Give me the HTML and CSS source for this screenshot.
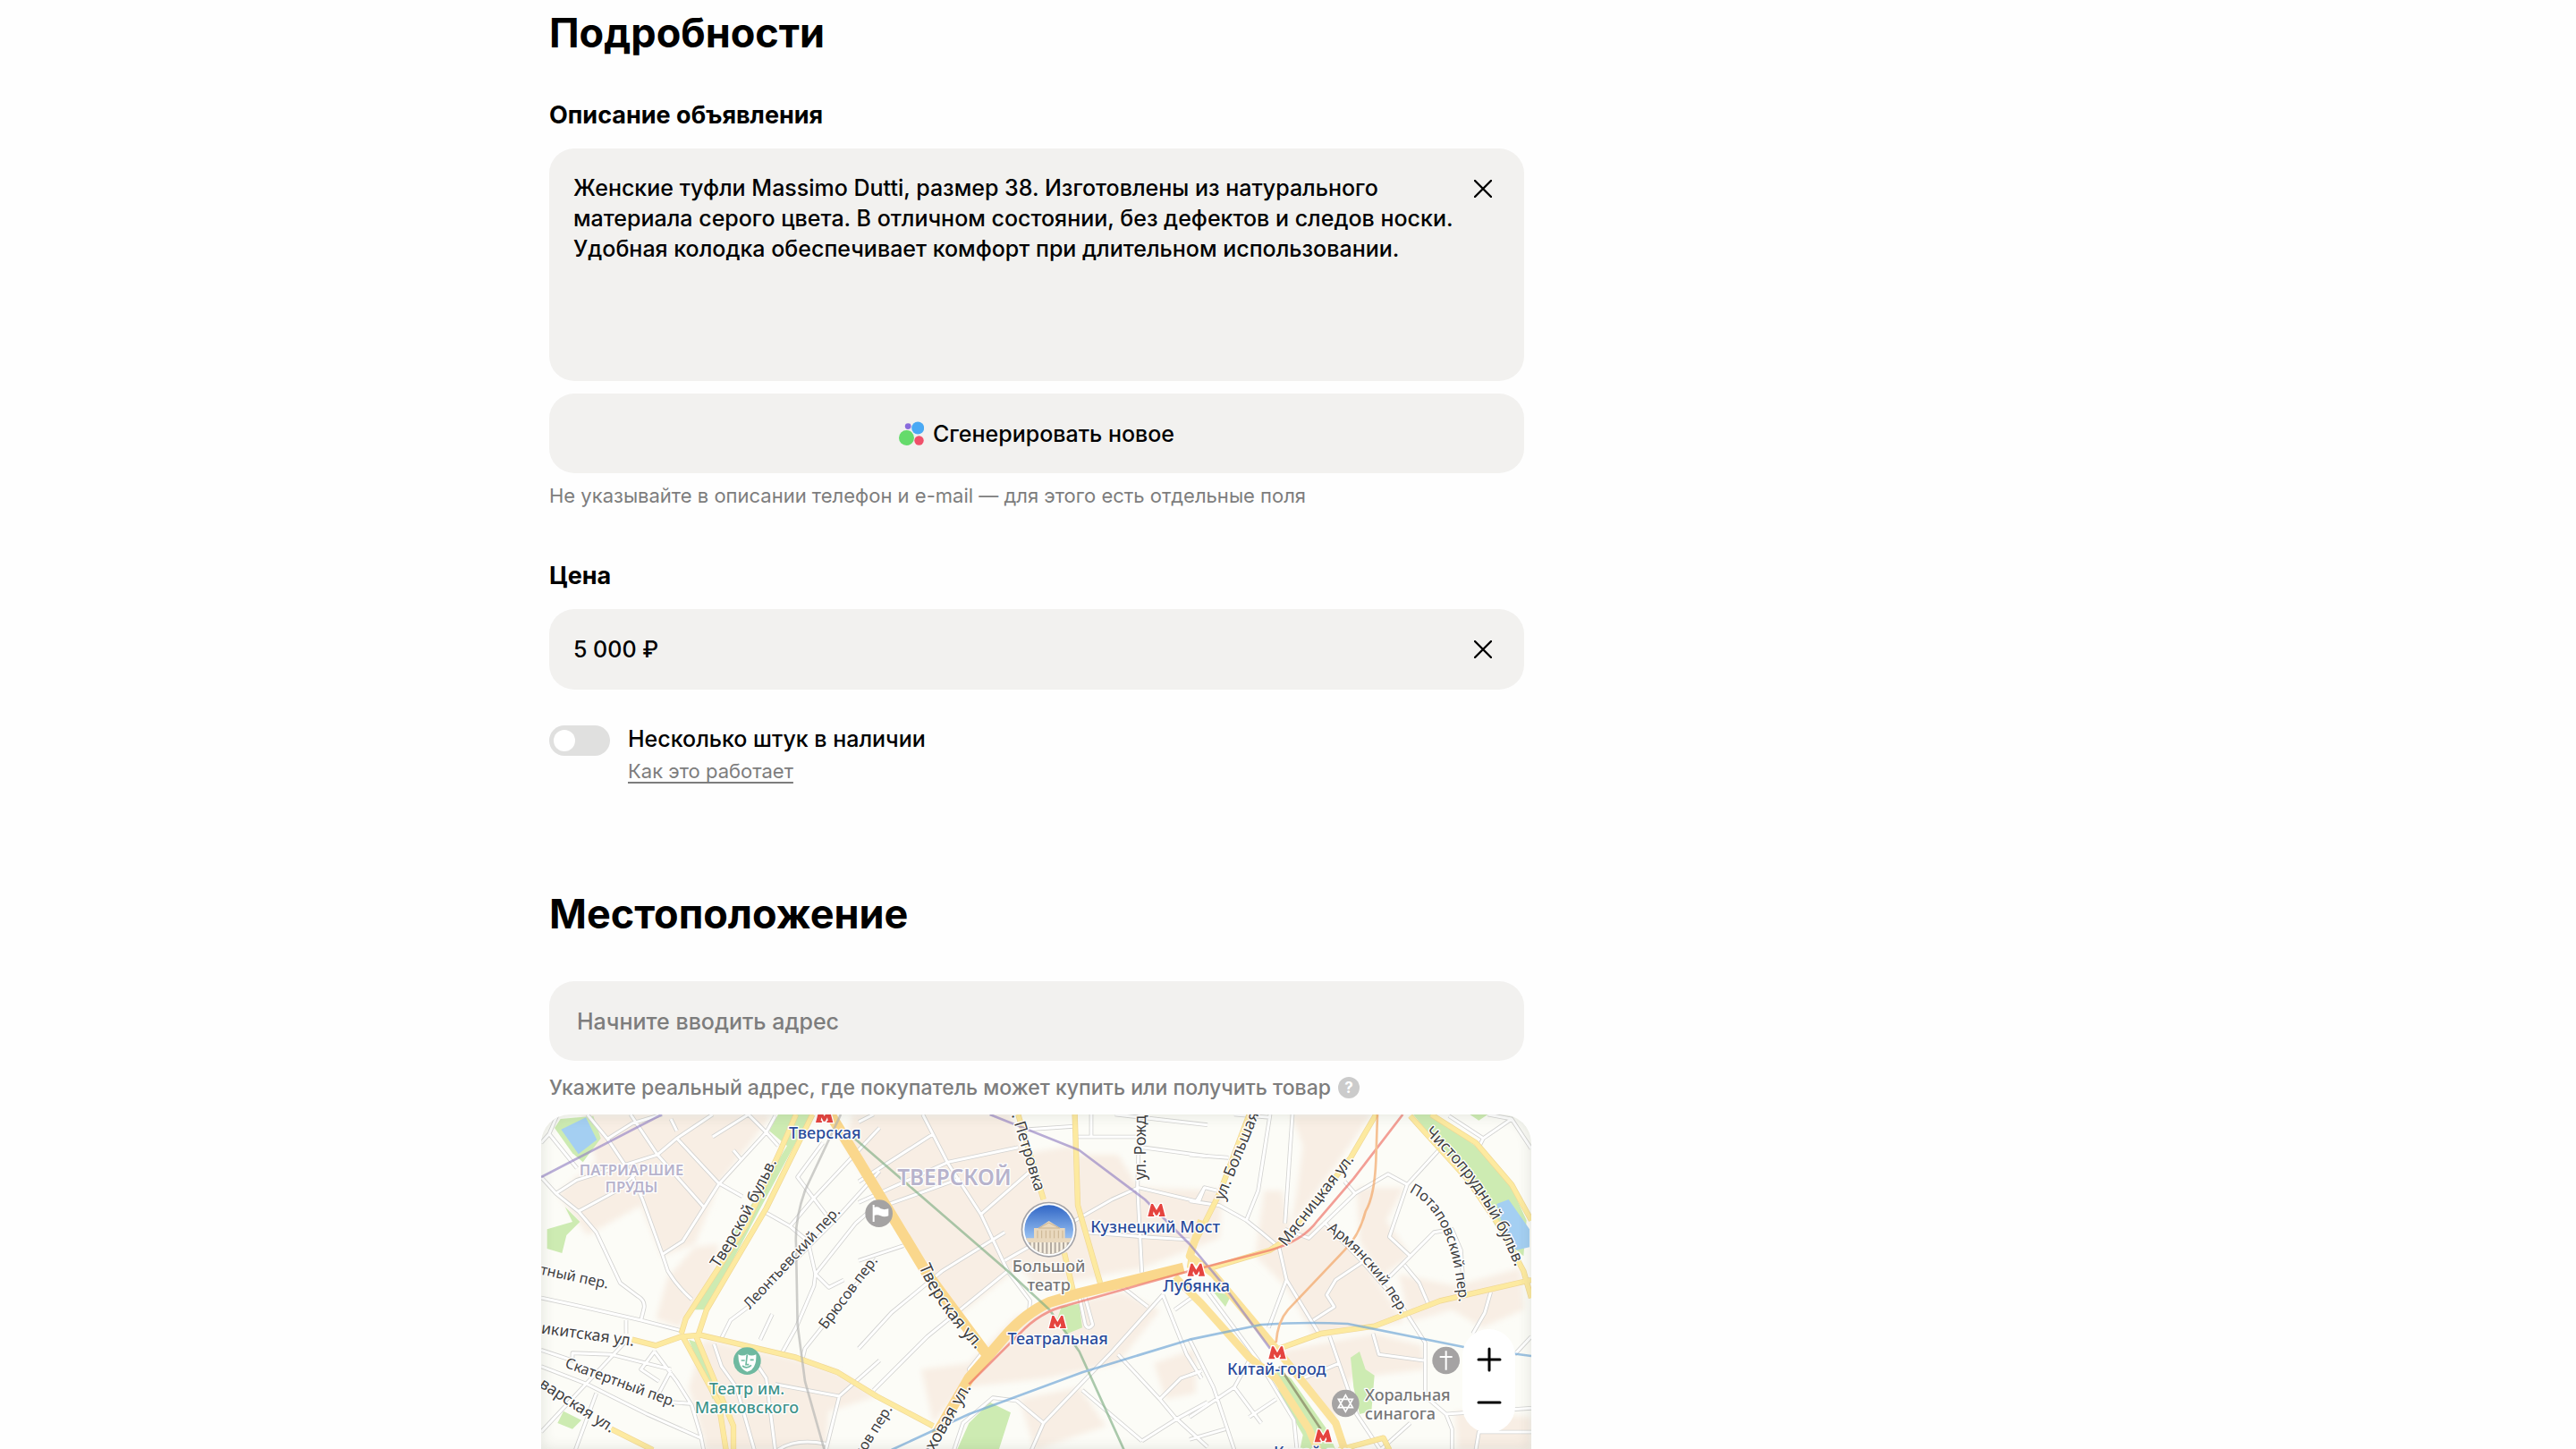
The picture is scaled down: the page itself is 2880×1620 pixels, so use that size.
FILE: index.html
```html
<!DOCTYPE html>
<html lang="ru">
<head>
<meta charset="utf-8">
<meta name="viewport" content="width=device-width, initial-scale=1">
<title>Подробности объявления</title>
<link rel="stylesheet" href="styles.css">
</head>
<body>
<main class="page">
  <form class="form">
    <section class="section">
      <h1 class="section-title">Подробности</h1>
      <div class="group">
        <label class="group-label" for="description">Описание объявления</label>
        <div class="field field-area">
          <textarea class="control" id="description" rows="6">Женские туфли Massimo Dutti, размер 38. Изготовлены из натурального
материала серого цвета. В отличном состоянии, без дефектов и следов носки.
Удобная колодка обеспечивает комфорт при длительном использовании.</textarea>
          <button class="clear" type="button" aria-label="Очистить описание">
            <svg width="20" height="20" viewBox="0 0 20 20" aria-hidden="true"><path d="M1 1L19 19M19 1L1 19"/></svg>
          </button>
        </div>
        <button class="generate" type="button">
          <svg width="28" height="28" viewBox="0 0 28 28" aria-hidden="true">
            <circle cx="8.5" cy="18.5" r="8.5" fill="#65db6b"/>
            <circle cx="21.2" cy="7.5" r="7" fill="#4aa9f4"/>
            <circle cx="10.2" cy="5.6" r="3.4" fill="#8a6bdc"/>
            <circle cx="22.5" cy="21.5" r="5.2" fill="#f0506a"/>
          </svg>
          Сгенерировать новое
        </button>
        <p class="hint hint-small">Не указывайте в описании телефон и e-mail — для этого есть отдельные поля</p>
      </div>
      <div class="group">
        <label class="group-label" for="price">Цена</label>
        <div class="field">
          <input class="control" id="price" type="text" value="5 000 ₽">
          <button class="clear" type="button" aria-label="Очистить цену">
            <svg width="20" height="20" viewBox="0 0 20 20" aria-hidden="true"><path d="M1 1L19 19M19 1L1 19"/></svg>
          </button>
        </div>
        <div class="switch-row">
          <input class="switch" id="several" type="checkbox">
          <div class="switch-text">
            <label for="several">Несколько штук в наличии</label>
            <a class="help-link" href="#how">Как это работает</a>
          </div>
        </div>
      </div>
    </section>

    <section class="section">
      <h2 class="section-title">Местоположение</h2>
      <div class="field">
        <input class="control control-address" type="text" aria-label="Адрес" placeholder="Начните вводить адрес">
      </div>
      <p class="hint hint-address">Укажите реальный адрес, где покупатель может купить или получить товар
        <button class="question" type="button" aria-label="Подсказка">?</button>
      </p>
      <div class="map">
        <svg class="map-canvas" viewBox="45 45 3321 1125" preserveAspectRatio="xMidYMin slice" role="img" aria-label="Карта центра Москвы">
          <defs>
            <linearGradient id="sky" x1="0" y1="0" x2="0" y2="1">
              <stop offset="0" stop-color="#2d63c4"/><stop offset=".6" stop-color="#8fb9ee"/><stop offset="1" stop-color="#e6dccf"/>
            </linearGradient>
            <clipPath id="round"><circle cx="638" cy="431" r="82"/></clipPath>
            <filter id="soft"><feGaussianBlur stdDeviation="9"/></filter>
            <path id="metro" d="M0 42L11 0H17L29 21L41 0H47L58 42H37L38 36H41L39 25L32 38H26L19 25L17 36H20L21 42Z"/>
            <g id="streets">
              <path d="M100 45L72 110L165 225M72 110L45 140M200 45L270 130L350 250L385 330L450 510L470 570Q500 620 550 665M345 45L435 180L590 355M270 125L350 75L450 45M95 310L165 265L435 180L500 125L620 45M45 255L95 310L170 370L230 440L310 610L370 655Q395 670 390 695L380 735M170 370L300 300L385 225M500 125L640 275L720 320M480 60L500 100M620 120L740 45M740 45L800 105L840 150M830 50L800 105L640 280L520 470L450 515M690 165L715 195M45 660L160 685L380 735L515 770M800 375L880 420L940 470L965 580L1010 625L1060 600M990 140L905 255L1000 380M1180 90L960 325L880 420M650 795L680 735L740 690L1030 400L1180 235M1180 340L1100 410L965 580L960 620L900 760L850 850M820 715L780 800M1170 530L930 830L920 870M625 815L650 890L700 960L760 1170M760 870L800 930L830 1170M830 950L1045 990M1180 870L1045 990L1000 1170M45 835L150 870L150 845L280 850L480 900M325 810L45 1110M45 890L200 950L400 1050L580 1130M330 735V780M425 840L380 900L440 940M425 840L500 940L550 1020L580 1120L590 1170M230 980L160 1170M480 905L440 980M480 1010L545 1015M840 1170Q900 1130 1000 1150"/>
              <path transform="translate(1110 0)" d="M0 70L50 45M215 45L300 210L410 380L500 570L575 670L570 720M0 270L250 110M0 340L300 205L535 155M410 380L570 240M90 350L340 260M0 535L150 485M490 535L850 330L940 290L1130 335M0 830L110 710L280 570L490 440M50 970L230 790L500 570M780 45V120M735 120H930M570 95L720 85M860 45L1170 80M950 155L1170 185M940 120L935 290L950 575M760 440L950 455L1110 465M1160 290L1130 340M880 620L970 690M1020 650L850 840L620 1080L580 1170M1020 650L1100 850L1150 930M1060 700L1130 650M740 655L760 750Q770 770 785 750L760 660M870 850L1010 1000L1060 1060L1170 1160M1010 1000L1080 930L1150 905M950 1140L1060 1070L1170 1010M750 970L950 1140M320 1170L350 1080L450 995L530 1005L620 1080M430 825L370 900L380 920"/>
              <path transform="translate(2220 0)" d="M150 45L270 55M0 180L130 190M270 45L230 300L190 400M345 45L320 410M300 490L325 600L410 740L440 790M470 790L560 1050L640 1170M0 335L100 350L190 400L240 440L300 490M30 340L50 290L90 300M320 430L400 460L555 310L665 245L730 280L840 160M520 270L555 310M730 280L670 455L740 520L660 600M740 520L820 440L880 430L910 500L920 640M720 550L770 610L800 680M450 405L580 540L720 700L790 810L790 990L860 1050L880 1100V1170M580 540L490 600L460 650L485 690L415 735M325 600L265 760M615 780L635 850L785 870M1010 640L990 710L950 780M1146 790L1090 850M870 50L985 125L1080 60L1146 160M985 125L970 155M1080 60L1000 45M860 1050L1146 1030M960 1170L970 1110L1146 1110M500 880L380 930M0 800L80 960L150 1170M60 640L230 870L350 1070L360 1170M0 1060L150 960L200 870M150 960L240 1080M200 1060L290 1000M0 920L40 905M0 1135L120 1100M640 1170L740 1080"/>
            </g>
            <g id="avenues">
              <path d="M900 45L850 160L730 420L640 560L530 730L515 780M955 45L800 360L600 700L570 790M350 800L430 820L515 790L580 785L900 860L1040 910L1170 990L1360 1090M520 790L640 1010L665 1170M565 790L690 1090V1170M280 1100L420 1170"/>
              <path transform="translate(1110 0)" d="M535 45L620 330M690 510L720 640M725 45L735 350L810 610"/>
              <path transform="translate(2220 0)" d="M200 45L100 310L10 490L0 560M625 45L540 190L330 460L270 500L70 560M300 830L440 780L620 755L840 670L1146 600M740 50L830 150L930 260L1040 420L1120 570L1146 660M810 45L960 140L1080 280L1146 400M500 1170L650 1130L670 1170"/>
            </g>
            <g id="highways">
              <path transform="translate(1110 0)" d="M-95 45L0 200L230 580L430 850M260 1120L370 930L490 790Q560 710 640 675L740 645L1090 560"/>
            </g>
            <g id="squares">
              <path transform="translate(2220 0)" d="M40 400L0 520L80 580L290 830L490 1080L520 1170M-50 590L40 680L200 860L290 930L400 1100L430 1170"/>
            </g>
            <path id="l-boulevard" d="M640 562Q750 395 850 170"/>
            <path id="l-tverskaya" d="M1312 556Q1375 710 1550 880"/>
            <path id="l-armyan" d="M2680 432Q2840 545 2945 750"/>
            <path id="l-chisto" d="M3008 108Q3225 300 3335 620"/>
            <path id="l-potap" d="M2955 305Q3105 375 3125 700"/>
          </defs>

          <rect x="45" y="45" width="3321" height="1125" fill="#fcfcf7"/>
          <g class="blocks" filter="url(#soft)">
            <path d="M180 45H820L640 280L560 480L450 520L380 350L200 450L100 310L230 200Z"/>
            <path d="M560 490L640 480L620 600L510 760L430 730L470 590Z"/>
            <path d="M590 800L920 870L1040 910L1170 990L1010 1040L1000 1170H600L540 960Z"/>
            <path d="M1090 45H1620L1720 340L1640 560L1420 740L1340 560L1200 360L1060 140Z"/>
            <path d="M1640 180L1830 150L1920 590L1700 620L1600 480Z"/>
            <path d="M1830 180H1980L2050 290L2330 300L2320 460L2060 560L1900 590Z"/>
            <path d="M1320 900L1480 880L1640 720L1990 640L2120 700L1980 880L1740 930L1460 960L1360 1080Z"/>
            <path d="M2100 880L2240 830L2240 980L2140 1000ZM1650 1000L1850 960L1940 1090L1700 1170Z"/>
            <path d="M2560 45H2830L2700 230L2560 420L2580 300L2600 150Z"/>
            <path d="M2470 300L2530 300L2560 430L2700 420L2820 560L2940 740L2640 790L2540 620L2440 520Z"/>
            <path d="M2780 290L2940 290L2880 400L2960 520L2860 590L2790 470Z"/>
            <path d="M2920 580L3110 620L3330 560L3340 700L3200 760L3100 700L2960 740Z"/>
            <path d="M2520 840L2840 780L3000 820L3010 900L2760 930L2700 1080L2640 1000Z"/>
            <path d="M3110 1040L3366 1060V1170H3120Z"/>
          </g>
          <g class="parks">
            <path d="M110 60L220 50L245 125L185 205L150 175L90 90Z"/>
            <path d="M125 355L175 405L130 450L115 510L65 495V430L150 405Z"/>
            <path d="M840 45H950L780 360L600 700H560L700 430L870 150L810 100Z"/>
            <path d="M120 1040L180 1070L150 1100L100 1080ZM540 800L570 810L640 990L620 1000Z"/>
            <path d="M1790 690L1850 680L1860 760L1810 780L1770 750ZM1480 1080L1550 1010L1620 1045L1580 1170H1440Z"/>
            <path d="M2970 45H3040L3190 160L3300 290L3350 400L3340 520L3270 460L3170 290Z"/>
            <path d="M2760 860L2790 840L2810 900L2840 920L2830 1040L2790 1050L2770 960ZM3160 45H3220L3190 65ZM2300 640L2360 650L2340 690Z"/>
            <path d="M2510 900L2560 930L2680 1100L2710 1170H2590L2600 1120L2520 980Z"/>
          </g>
          <path class="water" d="M112 95L195 55L232 130L170 178ZM3250 345L3290 330L3360 430V490L3315 500L3270 420Z"/>

          <use href="#streets" class="road street-edge"/>
          <use href="#streets" class="road street"/>
          <use href="#avenues" class="road avenue-edge"/>
          <use href="#avenues" class="road avenue"/>
          <use href="#squares" class="road square"/>
          <use href="#highways" class="road highway"/>

          <g class="lines">
            <path stroke="#9482c4" d="M45 255L450 45M1550 45L1850 165L2070 330L2220 480L2320 600L2490 830"/>
            <path stroke="#7fae84" d="M1090 120L1610 570L1750 700L1850 840L2000 1170"/>
            <path stroke="#b4b4b2" d="M1050 45L930 300Q895 400 900 480L905 750L930 940L995 1170"/>
            <path stroke="#69a3d6" d="M1220 1170L1480 1050L1860 910L2220 800L2460 750Q2600 740 2750 747L3140 825L3366 855"/>
            <path stroke="#ee6d62" d="M1480 950L1650 780Q1720 705 1810 685L2200 575L2490 500Q2600 470 2650 400L2770 260L2935 45"/>
            <path stroke="#f2a15e" d="M2850 45L2845 200Q2840 320 2810 370Q2790 450 2740 500L2550 700Q2515 740 2510 810"/>
            <path stroke="#7f7a5c" d="M2520 890L2660 1100"/>
          </g>

          <g class="lane-name">
            <text><textPath href="#l-armyan">Армянский пер.</textPath></text>
            <text><textPath href="#l-potap">Потаповский пер.</textPath></text>
            <text transform="translate(745 700) rotate(-47)">Леонтьевский пер.</text>
            <text transform="translate(1000 768) rotate(-53)">Брюсов пер.</text>
            <text class="to-end" transform="translate(268 629) rotate(12)">атный пер.</text>
            <text transform="translate(122 892) rotate(20)">Скатертный пер.</text>
            <text class="to-end" transform="translate(1224 1032) rotate(-58)">анов пер.</text>
          </g>
          <g class="street-name">
            <text><textPath href="#l-boulevard">Тверской бульв.</textPath></text>
            <text><textPath href="#l-chisto">Чистопрудный бульв.</textPath></text>
            <text class="to-end" transform="translate(355 822) rotate(8)">Никитская ул.</text>
            <text class="to-end" transform="translate(278 1114) rotate(33)">варская ул.</text>
            <text class="to-end" transform="translate(1702 305) rotate(73)">. Петровка</text>
            <text transform="translate(2074 265) rotate(-90)">ул. Рожде</text>
            <text transform="translate(2335 335) rotate(-68)">ул. Большая Л</text>
            <text transform="translate(2543 490) rotate(-52)">Мясницкая ул.</text>
          </g>
          <g class="main-street-name">
            <text><textPath href="#l-tverskaya">Тверская ул.</textPath></text>
            <text class="to-end" transform="translate(1488 960) rotate(-60)">оховая ул.</text>
          </g>

          <g class="district">
            <text x="348" y="250" font-size="50">ПАТРИАРШИЕ</text>
            <text x="348" y="305" font-size="50">ПРУДЫ</text>
            <text x="1431" y="283" font-size="73">ТВЕРСКОЙ</text>
          </g>

          <g class="place">
            <text x="1748" y="572">Большой</text>
            <text x="1748" y="636">театр</text>
            <text class="from-start" x="2808" y="1006">Хоральная</text>
            <text class="from-start" x="2808" y="1068">синагога</text>
            <g fill="#3f938a">
              <text x="735" y="985">Театр им.</text>
              <text x="735" y="1047">Маяковского</text>
            </g>
          </g>

          <g class="station">
            <use href="#metro" x="966" y="30"/><text x="997" y="127">Тверская</text>
            <use href="#metro" x="2080" y="345"/><text x="2105" y="441">Кузнецкий Мост</text>
            <use href="#metro" x="1748" y="720"/><text x="1778" y="817">Театральная</text>
            <use href="#metro" x="2213" y="545"/><text x="2243" y="640">Лубянка</text>
            <use href="#metro" x="2485" y="823"/><text x="2512" y="917">Китай-город</text>
            <use href="#metro" x="2639" y="1102"/><text x="2668" y="1196">Китай-город</text>
          </g>

          <circle cx="736" cy="872" r="46" fill="#6fb9a0"/>
          <path fill="#fff" d="M706 850Q722 858 736 848Q748 858 766 850Q768 888 750 902L736 908Q706 898 706 850Z"/>
          <path fill="none" stroke="#6fb9a0" stroke-width="5" d="M736 850L732 884H742M716 870H728M746 868H758M720 888Q734 900 750 886"/>
          <circle cx="1178" cy="377" r="46" fill="#a5a3a3"/>
          <path fill="#fff" d="M1157 348H1163V356Q1176 352 1184 361Q1196 366 1210 361V385Q1196 391 1184 385Q1174 380 1163 383V405H1157Z"/>
          <circle cx="2743" cy="1014" r="46" fill="#a5a3a3"/>
          <path fill="none" stroke="#fff" stroke-width="5" d="M2743 986L2767 1028H2719ZM2743 1042L2767 1000H2719Z"/>
          <circle cx="3080" cy="870" r="46" fill="#a5a3a3"/>
          <path stroke="#fff" stroke-width="6" d="M3080 838V902M3059 858H3101"/>
          <g transform="translate(1110 0)">
            <circle cx="638" cy="431" r="93" fill="#a3a3a8"/>
            <circle cx="638" cy="431" r="88" fill="#fff"/>
            <g clip-path="url(#round)">
              <rect x="550" y="345" width="176" height="176" fill="url(#sky)"/>
              <path fill="#e9d8bd" d="M588 426H602L638 402L676 426H692V462H588ZM556 460H722V474H556Z"/>
              <path fill="#b3aaa0" d="M572 474H706V520H572Z"/>
              <path stroke="#f7efe0" stroke-width="8" d="M582 474V520M596 474V520M610 474V520M624 474V520M638 474V520M652 474V520M666 474V520M680 474V520M694 474V520"/>
              <path fill="none" stroke="#c9b391" stroke-width="3" d="M604 426L638 408L674 426ZM600 434V460M614 434V460M628 434V460M642 434V460M656 434V460M670 434V460M684 434V460"/>
            </g>
          </g>
        </svg>
        <div class="zoom">
          <button type="button" aria-label="Приблизить"><svg width="28" height="28" viewBox="0 0 28 28" aria-hidden="true"><path d="M14 2V26M2 14H26"/></svg></button>
          <button type="button" aria-label="Отдалить"><svg width="28" height="28" viewBox="0 0 28 28" aria-hidden="true"><path d="M2 14H26"/></svg></button>
        </div>
      </div>
    </section>
  </form>
</main>
</body>
</html>
```
FILE: styles.css
```css
* {
  box-sizing: border-box;
}

body {
  margin: 0;
  background: #fefefe;
  color: #000;
  font-family: Inter, "Noto Sans", sans-serif;
  font-size: 25px;
  font-weight: 500;
  line-height: 34px;
}

button,
input,
textarea {
  margin: 0;
  padding: 0;
  border: 0;
  background: none;
  color: inherit;
  font: inherit;
}

.page {
  display: grid;
  grid-template-columns: minmax(0, 614fr) minmax(0, 1090fr) minmax(0, 1176fr);
}

.form {
  grid-column: 2;
  display: flex;
  flex-direction: column;
  gap: 106px;
}

.section {
  display: flex;
  flex-direction: column;
}

.section-title {
  margin: 8px 0 46px;
  font-size: 45px;
  font-weight: 700;
  line-height: 58px;
}

.group {
  display: flex;
  flex-direction: column;
}

.group + .group {
  margin-top: 56px;
}

.group-label {
  margin-bottom: 20px;
  font-size: 27px;
  font-weight: 700;
}

.field {
  display: flex;
  align-items: center;
  gap: 16px;
  min-height: 89px;
  padding: 27px 36px 27px 27px;
  border-radius: 28px;
  background: #f2f1ef;
}

.field-area {
  align-items: flex-start;
  min-height: 260px;
}

.control {
  flex: 1;
  min-width: 0;
  outline: 0;
  resize: none;
}

textarea.control {
  display: block;
}

.control-address {
  padding-left: 4px;
}

.control::placeholder {
  color: #7d7d7d;
  opacity: 1;
}

.clear {
  display: flex;
  padding: 8px 0;
}

.clear svg,
.zoom svg {
  fill: none;
  stroke: #000;
  stroke-width: 2.4;
  stroke-linecap: round;
}

.generate {
  display: flex;
  align-items: center;
  justify-content: center;
  gap: 10px;
  min-height: 89px;
  margin-top: 14px;
  border-radius: 28px;
  background: #f2f1ef;
}

.hint {
  margin: 0;
  color: #7d7d7d;
}

.hint-small {
  margin-top: 8px;
  font-size: 22px;
  font-weight: 400;
}

.hint-address {
  display: flex;
  align-items: center;
  gap: 8px;
  margin: 13px 0;
  font-size: 23px;
}

.question {
  width: 24px;
  height: 24px;
  border-radius: 50%;
  background: #cbcbcb;
  color: #fff;
  font-size: 17px;
  font-weight: 700;
  line-height: 24px;
}

.switch-row {
  display: flex;
  align-items: flex-start;
  gap: 20px;
  margin-top: 38px;
}

.switch {
  width: 68px;
  height: 34px;
  margin-top: 2px;
  padding: 5px;
  border-radius: 17px;
  background: #e0e0df;
  appearance: none;
}

.switch::before {
  content: "";
  display: block;
  width: 24px;
  height: 24px;
  border-radius: 50%;
  background: #fff;
}

.switch:checked::before {
  margin-left: auto;
}

.switch-text {
  display: flex;
  flex-direction: column;
  align-items: flex-start;
  gap: 2px;
}

.help-link {
  color: #7d7d7d;
  font-size: 22px;
  font-weight: 400;
  text-decoration-thickness: 2px;
  text-underline-offset: 4px;
}

.map {
  position: relative;
  margin: 0 -8px 0 -9px;
  border-radius: 32px 32px 0 0;
  overflow: hidden;
}

.map::after {
  content: "";
  position: absolute;
  inset: 0;
  border-radius: inherit;
  box-shadow: inset 0 0 16px rgba(60, 70, 60, 0.14);
  pointer-events: none;
}

.map-canvas {
  display: block;
  width: 100%;
  font-family: "Noto Sans", sans-serif;
}

.blocks {
  fill: #f8eee4;
}

.parks {
  fill: #cdebb2;
}

.water {
  fill: #a4cff2;
}

.road {
  fill: none;
  stroke-linejoin: round;
}

.street-edge {
  stroke: #d2d2d0;
  stroke-width: 14px;
}

.street {
  stroke: #fff;
  stroke-width: 9px;
}

.avenue-edge {
  stroke: #f0d795;
  stroke-width: 19px;
}

.avenue {
  stroke: #fdeaa0;
  stroke-width: 15px;
}

.square {
  stroke: #fbe29a;
  stroke-width: 26px;
}

.highway {
  stroke: #fad78c;
  stroke-width: 36px;
}

.lines {
  fill: none;
  stroke-width: 8px;
  stroke-linejoin: round;
  opacity: 0.65;
}

.map-canvas text {
  paint-order: stroke;
  stroke: #fff;
  stroke-width: 8px;
  stroke-linejoin: round;
}

.lane-name,
.street-name,
.main-street-name {
  fill: #3f3f3f;
  font-weight: 400;
}

.lane-name {
  font-size: 49px;
}

.street-name {
  font-size: 53px;
}

.main-street-name {
  font-size: 57px;
}

.map-canvas .to-end {
  text-anchor: end;
}

.district {
  fill: #b7b3cc;
  font-weight: 600;
  text-anchor: middle;
}

.place,
.station {
  font-size: 54px;
  font-weight: 500;
  text-anchor: middle;
}

.place {
  fill: #777;
}

.place .from-start {
  text-anchor: start;
}

.station {
  fill: #2b4c9b;
}

.station use {
  fill: #e5443f;
  stroke: #fff;
  stroke-width: 8px;
  paint-order: stroke;
}

.zoom {
  position: absolute;
  right: 18px;
  bottom: 19px;
  display: flex;
  flex-direction: column;
  justify-content: center;
  width: 59px;
  height: 116px;
  border-radius: 30px;
  background: #fff;
}

.zoom button {
  display: flex;
  align-items: center;
  justify-content: center;
  height: 48px;
}

.zoom svg {
  stroke-width: 3;
}
```
